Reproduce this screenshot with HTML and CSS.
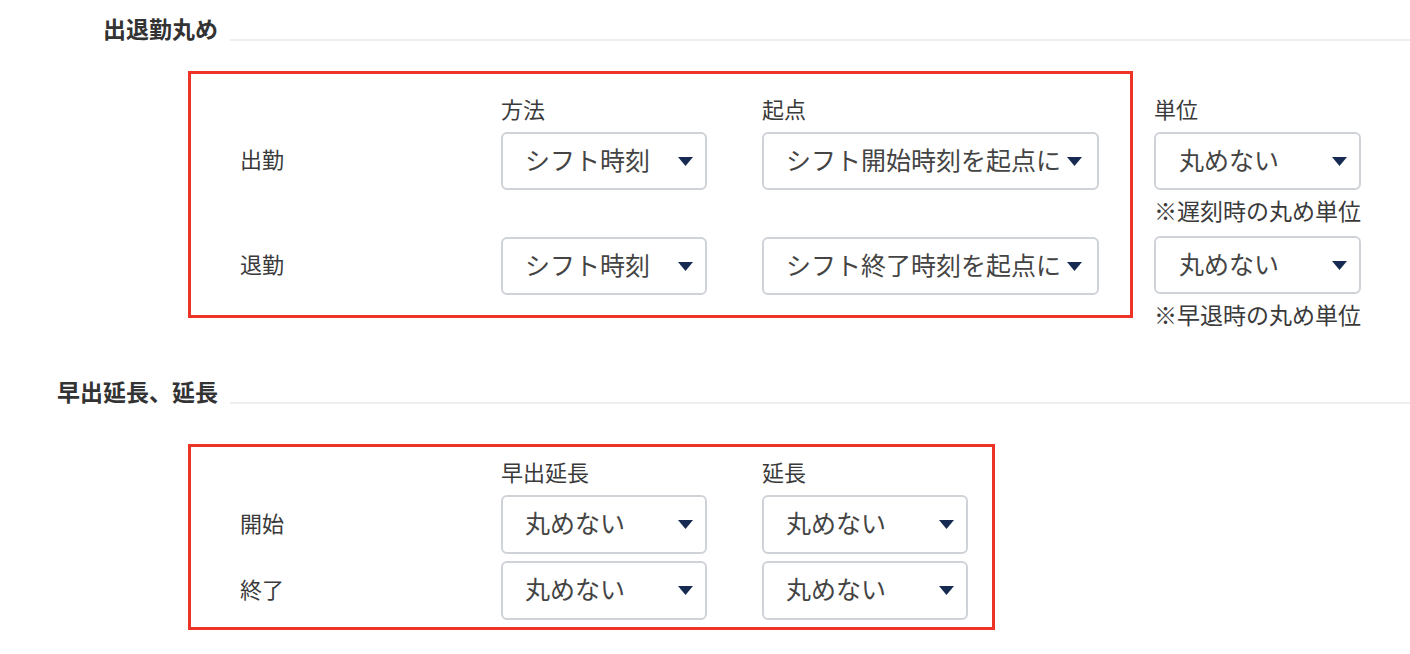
FILE: index.html
```html
<!DOCTYPE html>
<html lang="ja">
<head>
    <meta charset="utf-8">
    <title>丸め設定</title>
    <link rel="stylesheet" href="styles.css">
</head>
<body>
    <div class="page">

        <!-- 出退勤丸め -->
        <div class="section-head">
            <h2 class="section-title">出退勤丸め</h2>
            <div class="section-rule"></div>
        </div>

        <div class="section-body">
            <div class="frame frame-clock">
                <div class="field-row field-head">
                    <span></span>
                    <span class="col-label">方法</span>
                    <span class="col-label">起点</span>
                </div>
                <div class="field-row">
                    <span class="row-label">出勤</span>
                    <div class="select">
                        <span class="select-text">シフト時刻</span>
                        <svg class="select-arrow" width="15" height="9" viewBox="0 0 15 9"><polygon points="0,0 15,0 7.5,9" /></svg>
                    </div>
                    <div class="select select-wide">
                        <span class="select-text">シフト開始時刻を起点に</span>
                        <svg class="select-arrow" width="15" height="9" viewBox="0 0 15 9"><polygon points="0,0 15,0 7.5,9" /></svg>
                    </div>
                </div>
                <div class="field-row field-row-far">
                    <span class="row-label">退勤</span>
                    <div class="select">
                        <span class="select-text">シフト時刻</span>
                        <svg class="select-arrow" width="15" height="9" viewBox="0 0 15 9"><polygon points="0,0 15,0 7.5,9" /></svg>
                    </div>
                    <div class="select select-wide">
                        <span class="select-text">シフト終了時刻を起点に</span>
                        <svg class="select-arrow" width="15" height="9" viewBox="0 0 15 9"><polygon points="0,0 15,0 7.5,9" /></svg>
                    </div>
                </div>
            </div>

            <div class="unit-col">
                <span class="col-label">単位</span>
                <div class="select select-unit">
                    <span class="select-text">丸めない</span>
                    <svg class="select-arrow" width="15" height="9" viewBox="0 0 15 9"><polygon points="0,0 15,0 7.5,9" /></svg>
                </div>
                <p class="unit-note">※遅刻時の丸め単位</p>
                <div class="select select-unit select-unit-second">
                    <span class="select-text">丸めない</span>
                    <svg class="select-arrow" width="15" height="9" viewBox="0 0 15 9"><polygon points="0,0 15,0 7.5,9" /></svg>
                </div>
                <p class="unit-note">※早退時の丸め単位</p>
            </div>
        </div>

        <!-- 早出延長、延長 -->
        <div class="section-head section-head-second">
            <h2 class="section-title">早出延長、延長</h2>
            <div class="section-rule"></div>
        </div>

        <div class="section-body">
            <div class="frame frame-overtime">
                <div class="field-row field-head">
                    <span></span>
                    <span class="col-label">早出延長</span>
                    <span class="col-label">延長</span>
                </div>
                <div class="field-row">
                    <span class="row-label">開始</span>
                    <div class="select">
                        <span class="select-text">丸めない</span>
                        <svg class="select-arrow" width="15" height="9" viewBox="0 0 15 9"><polygon points="0,0 15,0 7.5,9" /></svg>
                    </div>
                    <div class="select">
                        <span class="select-text">丸めない</span>
                        <svg class="select-arrow" width="15" height="9" viewBox="0 0 15 9"><polygon points="0,0 15,0 7.5,9" /></svg>
                    </div>
                </div>
                <div class="field-row field-row-near">
                    <span class="row-label">終了</span>
                    <div class="select">
                        <span class="select-text">丸めない</span>
                        <svg class="select-arrow" width="15" height="9" viewBox="0 0 15 9"><polygon points="0,0 15,0 7.5,9" /></svg>
                    </div>
                    <div class="select">
                        <span class="select-text">丸めない</span>
                        <svg class="select-arrow" width="15" height="9" viewBox="0 0 15 9"><polygon points="0,0 15,0 7.5,9" /></svg>
                    </div>
                </div>
            </div>
        </div>

    </div>
</body>
</html>
```

FILE: styles.css
```css
/* Base */
html, body, div, span, h2, p { margin: 0; padding: 0; border: 0; }
html { box-sizing: border-box; }
*, *:before, *:after { box-sizing: inherit; }

body {
    background: #ffffff;
    color: #3a3a3a;
    font-family: "Noto Sans CJK JP", "Noto Sans", sans-serif;
    font-size: 22px;
    line-height: 33px;
}

.page {
    padding-top: 12px;
}

/* Section headings */
.section-head {
    display: flex;
    height: 32px;
}

.section-head-second {
    margin-top: 44px;
}

.section-title {
    width: 218px;
    text-align: right;
    font-size: 23px;
    font-weight: bold;
    line-height: 32px;
    color: #333333;
    white-space: nowrap;
}

.section-rule {
    flex: 1;
    align-self: flex-end;
    height: 2px;
    margin: 0 0 3px 12px;
    background: #eeeeee;
}

/* Highlighted frames */
.section-body {
    display: flex;
    align-items: flex-start;
    padding-left: 188px;
    margin-top: 27px;
}

.section-head-second + .section-body {
    margin-top: 37px;
}

.frame {
    border: 3px solid #ee3426;
    padding: 18px 31px 20px 49px;
}

.frame-overtime {
    padding: 8px 24px 7px 49px;
}

.field-row {
    display: grid;
    grid-template-columns: 206px 206px 337px;
    column-gap: 55px;
    align-items: center;
}

.frame-overtime .field-row {
    grid-template-columns: 206px 206px 206px;
}

.field-head {
    margin-bottom: 7px;
}

.field-row-far {
    margin-top: 47px;
}

.field-row-near {
    margin-top: 7px;
}

.col-label,
.row-label {
    display: block;
    white-space: nowrap;
}

.row-label {
    padding-bottom: 5px;
}

/* Select boxes */
.select {
    display: flex;
    align-items: center;
    justify-content: space-between;
    gap: 6px;
    height: 58px;
    padding: 0 12px 0 22px;
    border: 2px solid #cfd3d8;
    border-radius: 6px;
    background: #ffffff;
    color: #444444;
    font-size: 25px;
}

.frame-overtime .select {
    height: 59px;
}

.select-wide {
    padding-right: 15px;
}

.select-text {
    white-space: nowrap;
    padding-bottom: 4px;
}

.select-arrow {
    flex: none;
    fill: #172b52;
}

/* Unit column */
.unit-col {
    display: flex;
    flex-direction: column;
    width: 207px;
    margin-left: 21px;
    padding-top: 21px;
}

.unit-col .col-label {
    margin-bottom: 7px;
}

.select-unit {
    padding-left: 23px;
}

.select-unit-second {
    margin-top: 9px;
}

.unit-note {
    margin-top: 4px;
    font-size: 23px;
    white-space: nowrap;
}
```
